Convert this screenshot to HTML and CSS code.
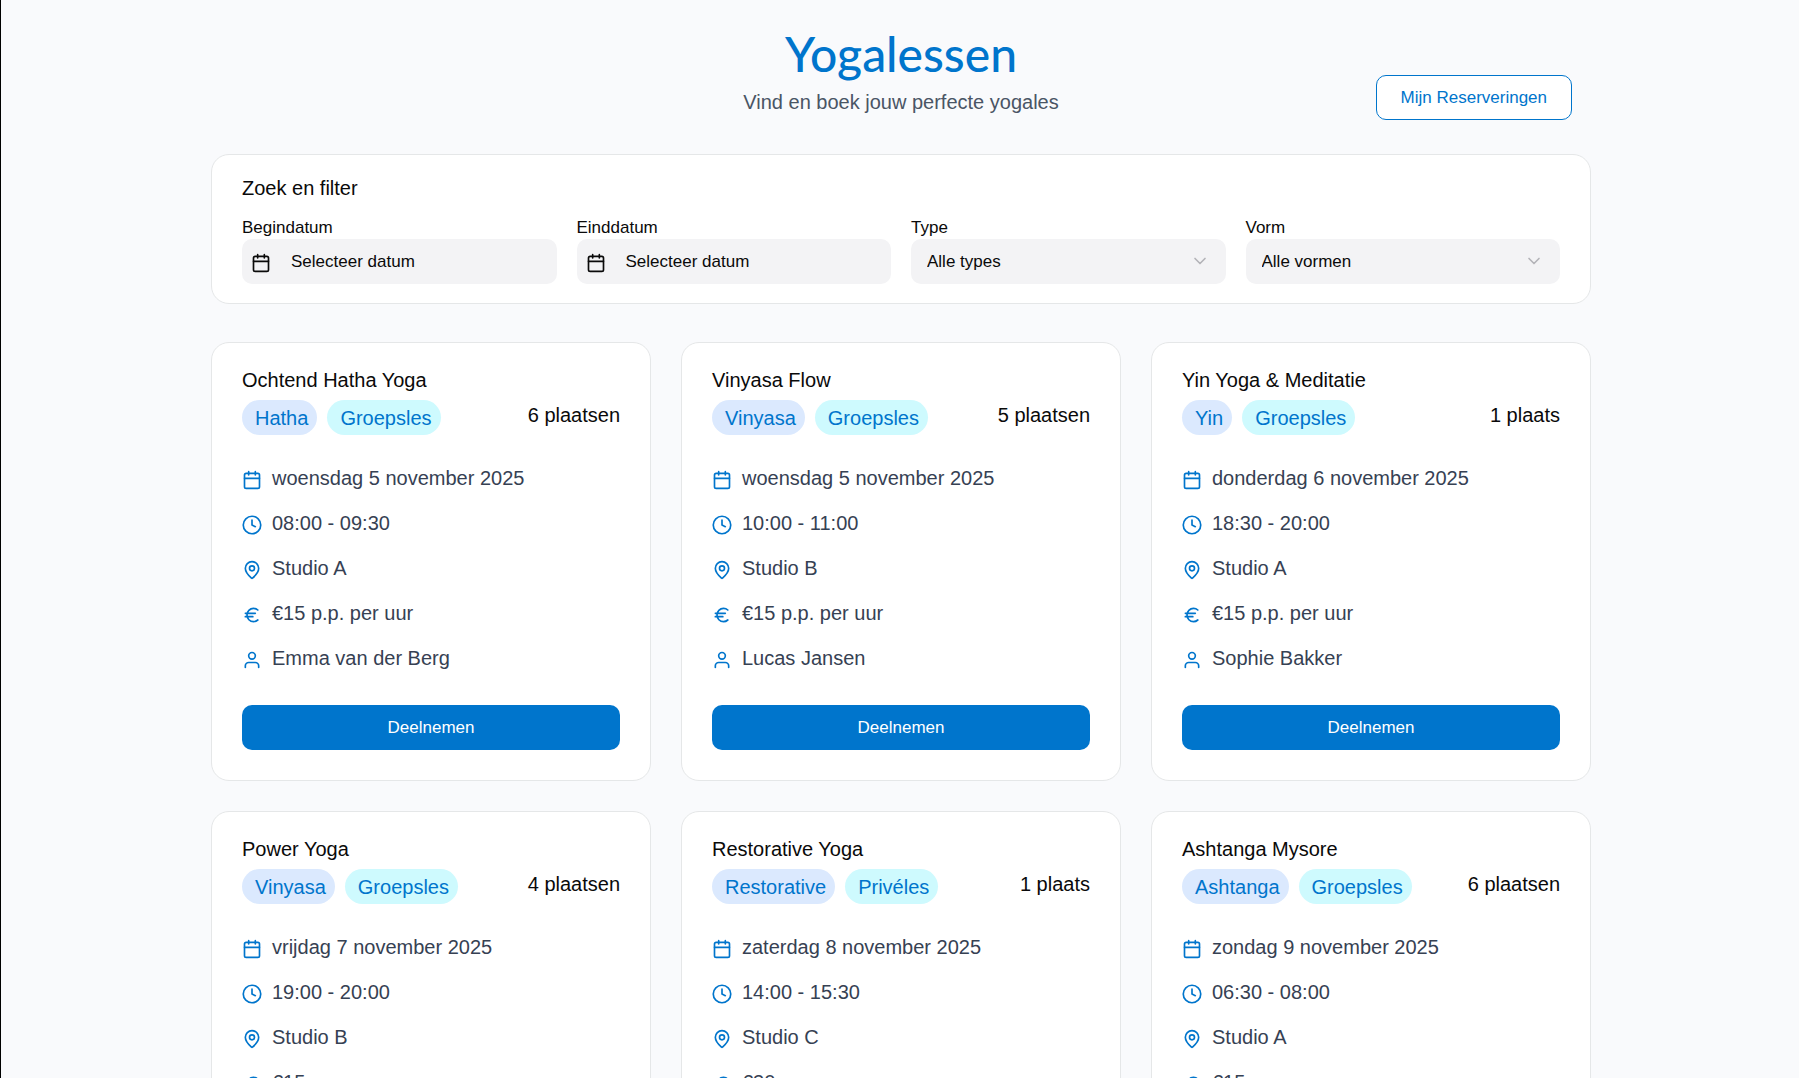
FILE: index.html
```
<!DOCTYPE html>
<html lang="nl">
<head>
  <meta charset="UTF-8">
  <meta name="viewport" content="width=device-width, initial-scale=1.0">
  <title>Yogalessen</title>
  <link rel="stylesheet" href="styles.css">
</head>
<body>
  <svg class="sprite" aria-hidden="true">
    <symbol id="i-calendar" viewBox="0 0 24 24"><path d="M8 2v4M16 2v4M3 10h18"/><rect x="3" y="4" width="18" height="18" rx="2"/></symbol>
    <symbol id="i-clock" viewBox="0 0 24 24"><circle cx="12" cy="12" r="10.5"/><path d="M12 6v6l4 2"/></symbol>
    <symbol id="i-pin" viewBox="0 0 24 24"><path d="M20 10c0 4.993-5.539 10.193-7.399 11.799a1 1 0 0 1-1.202 0C9.539 20.193 4 14.993 4 10a8 8 0 0 1 16 0"/><circle cx="12" cy="10" r="3"/></symbol>
    <symbol id="i-euro" viewBox="0 0 24 24"><path d="M4 10h12M4 14h9M19 6a7.7 7.7 0 0 0-5.2-2A7.9 7.9 0 0 0 6 12c0 4.4 3.5 8 7.8 8 2 0 3.8-.8 5.2-2"/></symbol>
    <symbol id="i-user" viewBox="0 0 24 24"><path d="M20 21v-2a4 4 0 0 0-4-4H8a4 4 0 0 0-4 4v2"/><circle cx="12" cy="7" r="4"/></symbol>
    <symbol id="i-down" viewBox="0 0 24 24"><path d="m6 9 6 6 6-6"/></symbol>
  </svg>

  <div class="container">
    <header class="page-header">
      <h1>Yogalessen</h1>
      <p>Vind en boek jouw perfecte yogales</p>
      <button type="button" class="btn-outline">Mijn Reserveringen</button>
    </header>

    <section class="filter">
      <h2>Zoek en filter</h2>
      <div class="filter-grid">
        <div class="field">
          <label for="begin">Begindatum</label>
          <button type="button" id="begin" class="control date"><svg class="icon"><use href="#i-calendar"/></svg>Selecteer datum</button>
        </div>
        <div class="field">
          <label for="eind">Einddatum</label>
          <button type="button" id="eind" class="control date"><svg class="icon"><use href="#i-calendar"/></svg>Selecteer datum</button>
        </div>
        <div class="field">
          <label for="type">Type</label>
          <div class="select-wrap">
            <select id="type" class="control">
              <option>Alle types</option>
            </select>
            <svg class="chevron"><use href="#i-down"/></svg>
          </div>
        </div>
        <div class="field">
          <label for="vorm">Vorm</label>
          <div class="select-wrap">
            <select id="vorm" class="control">
              <option>Alle vormen</option>
            </select>
            <svg class="chevron"><use href="#i-down"/></svg>
          </div>
        </div>
      </div>
    </section>

    <main class="lessons">
      <article class="card">
        <h3>Ochtend Hatha Yoga</h3>
        <div class="meta">
          <span class="tag">Hatha</span><span class="tag form">Groepsles</span>
          <span class="places">6 plaatsen</span>
        </div>
        <ul class="details">
          <li><svg class="icon"><use href="#i-calendar"/></svg>woensdag 5 november 2025</li>
          <li><svg class="icon"><use href="#i-clock"/></svg>08:00 - 09:30</li>
          <li><svg class="icon"><use href="#i-pin"/></svg>Studio A</li>
          <li><svg class="icon"><use href="#i-euro"/></svg>€15 p.p. per uur</li>
          <li><svg class="icon"><use href="#i-user"/></svg>Emma van der Berg</li>
        </ul>
        <button type="button" class="btn">Deelnemen</button>
      </article>

      <article class="card">
        <h3>Vinyasa Flow</h3>
        <div class="meta">
          <span class="tag">Vinyasa</span><span class="tag form">Groepsles</span>
          <span class="places">5 plaatsen</span>
        </div>
        <ul class="details">
          <li><svg class="icon"><use href="#i-calendar"/></svg>woensdag 5 november 2025</li>
          <li><svg class="icon"><use href="#i-clock"/></svg>10:00 - 11:00</li>
          <li><svg class="icon"><use href="#i-pin"/></svg>Studio B</li>
          <li><svg class="icon"><use href="#i-euro"/></svg>€15 p.p. per uur</li>
          <li><svg class="icon"><use href="#i-user"/></svg>Lucas Jansen</li>
        </ul>
        <button type="button" class="btn">Deelnemen</button>
      </article>

      <article class="card">
        <h3>Yin Yoga &amp; Meditatie</h3>
        <div class="meta">
          <span class="tag">Yin</span><span class="tag form">Groepsles</span>
          <span class="places">1 plaats</span>
        </div>
        <ul class="details">
          <li><svg class="icon"><use href="#i-calendar"/></svg>donderdag 6 november 2025</li>
          <li><svg class="icon"><use href="#i-clock"/></svg>18:30 - 20:00</li>
          <li><svg class="icon"><use href="#i-pin"/></svg>Studio A</li>
          <li><svg class="icon"><use href="#i-euro"/></svg>€15 p.p. per uur</li>
          <li><svg class="icon"><use href="#i-user"/></svg>Sophie Bakker</li>
        </ul>
        <button type="button" class="btn">Deelnemen</button>
      </article>

      <article class="card">
        <h3>Power Yoga</h3>
        <div class="meta">
          <span class="tag">Vinyasa</span><span class="tag form">Groepsles</span>
          <span class="places">4 plaatsen</span>
        </div>
        <ul class="details">
          <li><svg class="icon"><use href="#i-calendar"/></svg>vrijdag 7 november 2025</li>
          <li><svg class="icon"><use href="#i-clock"/></svg>19:00 - 20:00</li>
          <li><svg class="icon"><use href="#i-pin"/></svg>Studio B</li>
          <li><svg class="icon"><use href="#i-euro"/></svg>€15 p.p. per uur</li>
        </ul>
        <button type="button" class="btn">Deelnemen</button>
      </article>

      <article class="card">
        <h3>Restorative Yoga</h3>
        <div class="meta">
          <span class="tag">Restorative</span><span class="tag form">Privéles</span>
          <span class="places">1 plaats</span>
        </div>
        <ul class="details">
          <li><svg class="icon"><use href="#i-calendar"/></svg>zaterdag 8 november 2025</li>
          <li><svg class="icon"><use href="#i-clock"/></svg>14:00 - 15:30</li>
          <li><svg class="icon"><use href="#i-pin"/></svg>Studio C</li>
          <li><svg class="icon"><use href="#i-euro"/></svg>€30 p.p. per uur</li>
        </ul>
        <button type="button" class="btn">Deelnemen</button>
      </article>

      <article class="card">
        <h3>Ashtanga Mysore</h3>
        <div class="meta">
          <span class="tag">Ashtanga</span><span class="tag form">Groepsles</span>
          <span class="places">6 plaatsen</span>
        </div>
        <ul class="details">
          <li><svg class="icon"><use href="#i-calendar"/></svg>zondag 9 november 2025</li>
          <li><svg class="icon"><use href="#i-clock"/></svg>06:30 - 08:00</li>
          <li><svg class="icon"><use href="#i-pin"/></svg>Studio A</li>
          <li><svg class="icon"><use href="#i-euro"/></svg>€15 p.p. per uur</li>
        </ul>
        <button type="button" class="btn">Deelnemen</button>
      </article>
    </main>
  </div>
</body>
</html>
```

FILE: styles.css
```
* {
  box-sizing: border-box;
}
body {
  margin: 0;
  padding-left: 2px;
  border-left: 1px solid #000;
  background: #f9fafc;
  color: #0a0a0a;
  font: 20px/26px "Liberation Sans", Arial, sans-serif;
}
h1, h2, h3, p, ul {
  margin: 0;
  padding: 0;
  font-size: 20px;
  font-weight: 400;
}
button, select {
  font: 17px "Liberation Sans", Arial, sans-serif;
}
svg {
  fill: none;
  stroke: currentColor;
  stroke-width: 2;
  stroke-linecap: round;
  stroke-linejoin: round;
}
.sprite {
  display: none;
}
.container {
  max-width: 1380px;
  margin: 0 auto;
}

/* header */
.page-header {
  position: relative;
  padding: 24px 0 39px;
  text-align: center;
}
.page-header h1 {
  color: #0075cc;
  font: 500 48px/60px Lato, sans-serif;
  margin-bottom: 5px;
}
.page-header p {
  color: #4a5565;
}
.btn-outline {
  position: absolute;
  right: 19px;
  bottom: 34px;
  height: 45px;
  padding: 0 24px;
  color: #0075cc;
  background: #fff;
  border: 1px solid #0075cc;
  border-radius: 10px;
}

/* filter */
.filter, .card {
  background: #fff;
  border: 1px solid #e5e7e8;
  border-radius: 18px;
}
.filter {
  padding: 20px 30px 19px;
  margin-bottom: 38px;
}
.filter h2 {
  margin-bottom: 16px;
}
.filter-grid {
  display: grid;
  grid-template-columns: repeat(4, 1fr);
  gap: 20px;
}
.field label {
  display: block;
  font-size: 17px;
  line-height: 22px;
}
.control {
  display: block;
  width: 100%;
  height: 45px;
  padding: 0 16px;
  color: #0a0a0a;
  background: #f3f3f5;
  border: 0;
  border-radius: 10px;
  appearance: none;
}
.date {
  display: flex;
  align-items: center;
  gap: 20px;
  padding: 0 9px;
}
.select-wrap {
  position: relative;
}
.chevron {
  position: absolute;
  right: 16px;
  top: 12px;
  width: 20px;
  height: 20px;
  color: #b4b4b8;
  pointer-events: none;
}
.icon {
  flex: none;
  width: 20px;
  height: 20px;
  margin-top: 2px;
  overflow: visible;
}

/* cards */
.lessons {
  display: grid;
  grid-template-columns: repeat(3, 1fr);
  gap: 30px;
  padding-bottom: 30px;
}
.card {
  padding: 24px 30px 30px;
}
.card h3 {
  margin-bottom: 7px;
}
.meta {
  display: flex;
  gap: 10px;
}
.tag {
  padding: 1px 9px 0 13px;
  border-radius: 18px;
  line-height: 34px;
  color: #0075cc;
  background: #dbe9fe;
}
.form {
  background: #cefafe;
}
.places {
  margin-left: auto;
  line-height: 30px;
}
.details {
  display: grid;
  gap: 15px;
  margin: 28px 0 32px;
  list-style: none;
  color: #364153;
}
.details li {
  display: flex;
  align-items: center;
  gap: 10px;
  line-height: 30px;
}
.details .icon {
  margin-top: 4px;
  color: #0075cc;
}
.btn {
  width: 100%;
  height: 45px;
  color: #fff;
  background: #0075cc;
  border: 0;
  border-radius: 10px;
}
```
